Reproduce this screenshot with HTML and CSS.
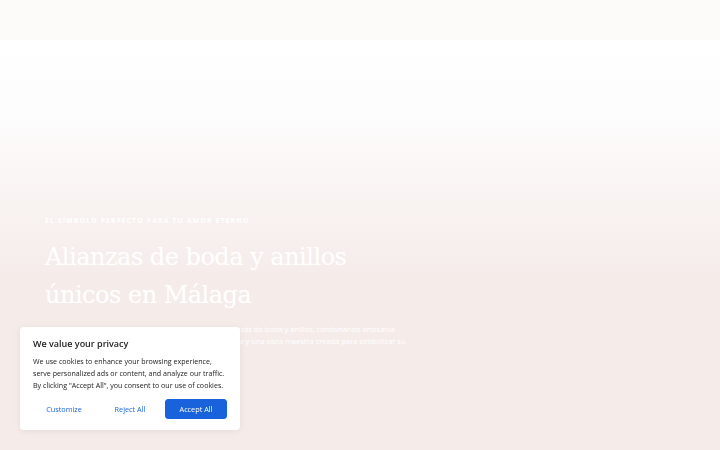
FILE: index.html
```html
<!DOCTYPE html>
<html lang="es">
<head>
<meta charset="utf-8">
<title>Alianzas de boda</title>
<link rel="stylesheet" href="styles.css">
</head>
<body>
<header class="topbar"></header>
<main class="hero">
  <div class="hero-content">
    <p class="eyebrow">El símbolo perfecto para tu amor eterno</p>
    <h1 class="title">Alianzas de boda y anillos<br>únicos en Málaga</h1>
    <p class="lead">Descubre en nuestra joyería exclusiva colección de alianzas de boda y anillos, combinando artesanía<br>tradicional y diseño contemporáneo. Cada pieza es única y una obra maestra creada para simbolizar su</p>
  </div>
</main>
<div class="cookie">
  <h2 class="cookie-title">We value your privacy</h2>
  <p class="cookie-text">We use cookies to enhance your browsing experience,<br>serve personalized ads or content, and analyze our traffic.<br>By clicking "Accept All", you consent to our use of cookies.</p>
  <div class="cookie-actions">
    <button class="btn btn-link">Customize</button>
    <button class="btn btn-link">Reject All</button>
    <button class="btn btn-primary">Accept All</button>
  </div>
</div>
</body>
</html>
```
FILE: styles.css
```css
* { box-sizing: border-box; }
html, body { margin: 0; padding: 0; }
body {
  width: 720px;
  height: 450px;
  overflow: hidden;
  background: #f5ecea;
  font-family: "Open Sans", "Noto Sans", sans-serif;
}
.topbar {
  height: 40px;
  background: #fcfbf9;
}
.hero {
  height: 410px;
  background: linear-gradient(to bottom, #ffffff 0px, #fdfcfc 80px, #f8f2f0 170px, #f5ecea 240px, #f5ecea 410px);
  padding: 176px 0 0 45px;
}
.hero-content {
  width: 380px;
}
.eyebrow {
  margin: 0;
  color: #ffffff;
  font-size: 7px;
  font-weight: 700;
  letter-spacing: 1.05px;
  text-transform: uppercase;
  line-height: 10px;
  white-space: nowrap;
}
.title {
  margin: 12px 0 0;
  color: #ffffff;
  font-family: "DejaVu Serif", "Liberation Serif", serif;
  font-weight: 400;
  font-size: 24px;
  line-height: 38px;
  letter-spacing: -0.5px;
}
.lead {
  margin: 9px 0 0;
  color: #ffffff;
  font-size: 7.5px;
  line-height: 12px;
  white-space: nowrap;
}
.cookie {
  position: fixed;
  left: 20px;
  bottom: 20px;
  width: 220px;
  background: #ffffff;
  border-radius: 4px;
  box-shadow: 0 1px 6px rgba(120, 90, 90, 0.12);
  padding: 11px 13px 11px 13px;
}
.cookie-title {
  margin: 0;
  font-size: 9px;
  font-weight: 600;
  color: #212121;
  line-height: 12px;
}
.cookie-text {
  margin: 5px 0 0;
  font-size: 7.1px;
  line-height: 12px;
  color: #212121;
  white-space: nowrap;
}
.cookie-actions {
  display: flex;
  align-items: center;
  margin-top: 8px;
  gap: 4px;
}
.btn {
  font-family: "Open Sans", "Noto Sans", sans-serif;
  font-size: 7.3px;
  height: 20px;
  border-radius: 3px;
  border: 1px solid transparent;
  padding: 0;
  flex: 1;
  cursor: pointer;
}
.btn-link {
  background: #ffffff;
  color: #1863dc;
}
.btn-primary {
  background: #1863dc;
  border-color: #1863dc;
  color: #ffffff;
}
```
